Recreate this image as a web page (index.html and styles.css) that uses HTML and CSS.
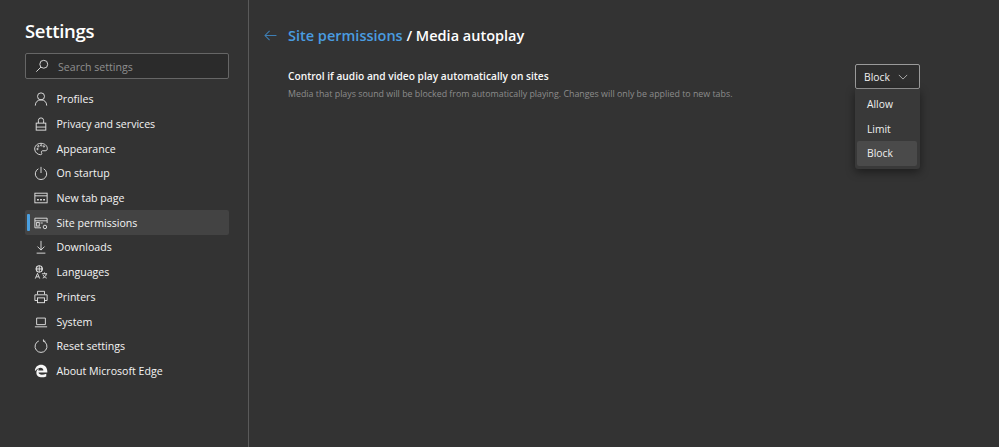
FILE: index.html
```html
<!DOCTYPE html>
<html lang="en">
<head>
<meta charset="utf-8">
<title>Settings</title>
<link rel="stylesheet" href="styles.css">
</head>
<body>
<div class="app">
  <aside class="sidebar">
    <h1 class="title">Settings</h1>
    <div class="search">
      <svg class="search-icon" viewBox="0 0 16 16"><circle cx="10" cy="6" r="4.5"/><path d="M6.800 9.200 1.500 14.500"/></svg>
      <span class="search-text">Search settings</span>
    </div>
    <nav class="nav">
      <a class="item"><svg viewBox="0 0 16 16"><circle cx="8" cy="5" r="4"/><path d="M1.500 15.500c0-4 2.500-6.500 6.500-6.500s6.500 2.500 6.500 6.500"/></svg>Profiles</a>
      <a class="item"><svg viewBox="0 0 16 16"><rect x="2.500" y="7" width="11" height="8"/><path d="M5 7V4a3 3 0 0 1 6 0v3M2.500 11.500h11"/></svg>Privacy and services</a>
      <a class="item"><svg viewBox="0 0 16 16"><path d="M8 1.500C4 1.500.8 4.300.8 8c0 3.600 3.200 6.500 6.700 6.500 1.600 0 1.700-1.200 1.100-2.200-.6-1.100 0-2.300 1.400-2.300h2.800c1.600 0 2.400-1 2.400-2.500 0-3.400-3.300-6-7.200-6z"/><circle cx="4" cy="8" r=".8"/><circle cx="5" cy="4.800" r=".8"/><circle cx="8.200" cy="3.800" r=".8"/><circle cx="11.300" cy="5" r=".8"/></svg>Appearance</a>
      <a class="item"><svg viewBox="0 0 16 16"><path d="M5 3.200a6.500 6.500 0 1 0 6 0M8 1v7"/></svg>On startup</a>
      <a class="item"><svg viewBox="0 0 16 16"><rect x="1" y="2.500" width="14" height="11"/><path d="M1 5.500h14"/><path class="thick" d="M3.500 10h2M7 10h2M10.500 10h2"/></svg>New tab page</a>
      <a class="item active"><svg viewBox="0 0 16 16"><path d="M15 8V2.500H1v11h7M1 5.500h14"/><rect x="3" y="7.500" width="3" height="4"/><path d="M7.500 8h2.500"/><circle cx="12.500" cy="12.500" r="2"/></svg>Site permissions</a>
      <a class="item"><svg viewBox="0 0 16 16"><path d="M8 1v10.500M4 7.500l4 4 4-4M3 15h10"/></svg>Downloads</a>
      <a class="item"><svg viewBox="0 0 16 16"><circle cx="6" cy="4.500" r="3.800"/><path d="M2.300 4.500h7.400M6 .7v7.600M3.800 1.200c-1 2-1 4.600 0 6.600M8.200 1.200c1 2 1 4.600 0 6.600"/><path d="M1.500 15.500 4 9.500l2.500 6M2.500 13.500h3M9 10h6M12 8.500V10M10 15c2.500-1 4-2.800 4-5M10.500 11.500c.8 1.800 2.200 3 4 3.500"/></svg>Languages</a>
      <a class="item"><svg viewBox="0 0 16 16"><path d="M4 5V1.500h8V5M4 12H1V5.500h14V12h-3"/><rect x="4" y="9" width="8" height="5.500"/></svg>Printers</a>
      <a class="item"><svg viewBox="0 0 16 16"><path d="M3 3.500h10v7.500H3zM1 13.500h14"/></svg>System</a>
      <a class="item"><svg viewBox="0 0 16 16"><path d="M5.500 2.200a6.800 6.800 0 1 0 5 0M10.800.5v2h2.200"/></svg>Reset settings</a>
      <a class="item"><svg viewBox="0 0 16 16"><path class="solid" d="M1 7.500C1.300 3.500 4.300.8 8 .8c4.200 0 7.200 3 7.200 7.700v1.300H5.200c.3 2.700 4.300 3.300 8.800 1.200v3.200c-5.500 2.200-11.300.7-11.300-4.300 0-2 1-3.700 3-4.800-.5.700-.8 1.300-.8 2.200h5.800c0-3.200-4.800-4.600-8.900.4z"/></svg>About Microsoft Edge</a>
    </nav>
  </aside>
  <main class="main">
    <header class="crumbs">
      <svg class="back" viewBox="0 0 14 12"><path d="M13.500 6H1M6 1 1 6l5 5"/></svg>
      <h2 class="crumb-title"><span class="link">Site permissions</span> / Media autoplay</h2>
    </header>
    <section class="setting">
      <div class="setting-text">
        <div class="setting-label">Control if audio and video play automatically on sites</div>
        <div class="setting-desc">Media that plays sound will be blocked from automatically playing. Changes will only be applied to new tabs.</div>
      </div>
      <div class="dropdown">
        <div class="select">Block<svg viewBox="0 0 12 7"><path d="M1 1l5 5 5-5"/></svg></div>
        <ul class="menu">
          <li class="option">Allow</li>
          <li class="option">Limit</li>
          <li class="option selected">Block</li>
        </ul>
      </div>
    </section>
  </main>
</div>
</body>
</html>
```
FILE: styles.css
```css
* { box-sizing: border-box; }
html, body { margin: 0; height: 100%; }
body {
  background: #333333;
  color: #f2f2f2;
  font-family: "Open Sans", "Noto Sans", "Liberation Sans", sans-serif;
  overflow: hidden;
}
.app { display: flex; height: 447px; }
.sidebar {
  width: 249px;
  flex: none;
  border-right: 1px solid #5a5a5a;
  padding: 18px 19px 0 25px;
}
.title {
  margin: 0;
  font-size: 18.500px;
  line-height: 26px;
  letter-spacing: -0.300px;
  font-weight: 600;
  color: #fff;
}
.search {
  margin-top: 9px;
  height: 26px;
  background: #2b2b2b;
  border: 1px solid #666;
  border-radius: 2px;
  display: flex;
  align-items: center;
  padding-left: 9px;
  font-size: 10.600px;
  color: #8f8f8f;
}
.search-text { padding-top: 1px; }
.search-icon {
  width: 14px;
  height: 14px;
  margin-right: 9px;
  fill: none;
  stroke: #d8d8d8;
  stroke-width: 1.100;
}
.nav { margin-top: 8px; display: flex; flex-direction: column; }
.item {
  position: relative;
  height: 24.700px;
  display: flex;
  align-items: center;
  padding-left: 9px;
  font-size: 10.600px;
  color: #f4f4f4;
  border-radius: 2px;
}
.item svg {
  width: 14px;
  height: 14px;
  margin-right: 8.500px;
  flex: none;
  fill: none;
  stroke: #e4e4e4;
  stroke-width: 1.050;
}
.item svg .thick { stroke-width: 1.800; }
.item svg .solid { fill: #f6f6f6; stroke: none; }
.item.active { background: #434343; }
.item.active::before {
  content: "";
  position: absolute;
  left: 2px;
  top: 4px;
  bottom: 4px;
  width: 3px;
  background: #4a9fe0;
  border-radius: 1px;
}
.main { flex: 1; padding: 25px 79px 0 15px; }
.crumbs { display: flex; align-items: center; height: 22px; }
.back {
  width: 13px;
  height: 11px;
  margin: -2px 11px 0 0;
  fill: none;
  stroke: #3e7fb5;
  stroke-width: 1.100;
}
.crumb-title {
  margin: 0;
  font-size: 14.500px;
  line-height: 22px;
  font-weight: 600;
  color: #fff;
}
.link { color: #4a9ce0; }
.setting {
  display: flex;
  justify-content: space-between;
  align-items: flex-start;
  margin-top: 17px;
  padding-left: 24px;
}
.setting-text { padding-top: 5px; }
.setting-label {
  font-size: 10.200px;
  line-height: 14px;
  font-weight: 600;
  color: #f8f8f8;
}
.setting-desc {
  margin-top: 4.500px;
  font-size: 8.850px;
  line-height: 12px;
  color: #8c8c8c;
}
.dropdown { position: relative; width: 65px; }
.select {
  height: 25px;
  border: 1px solid #9a9a9a;
  border-radius: 2px;
  background: #2e2e2e;
  display: flex;
  align-items: center;
  justify-content: space-between;
  padding: 0 11px 0 8px;
  font-size: 10.300px;
  color: #f0f0f0;
}
.select svg {
  width: 10px;
  height: 6px;
  fill: none;
  stroke: #c0c0c0;
  stroke-width: 1;
}
.menu {
  position: absolute;
  top: 25px;
  left: 0;
  width: 65px;
  margin: 0;
  padding: 3px 3px 3px 2px;
  list-style: none;
  background: #393939;
  border-radius: 0 0 3px 3px;
  box-shadow: 0 3px 10px rgba(0, 0, 0, 0.45);
}
.option {
  height: 24.500px;
  display: flex;
  align-items: center;
  padding-left: 10px;
  font-size: 10.300px;
  color: #f0f0f0;
  border-radius: 2px;
}
.option.selected { background: #4a4a4a; }
```
